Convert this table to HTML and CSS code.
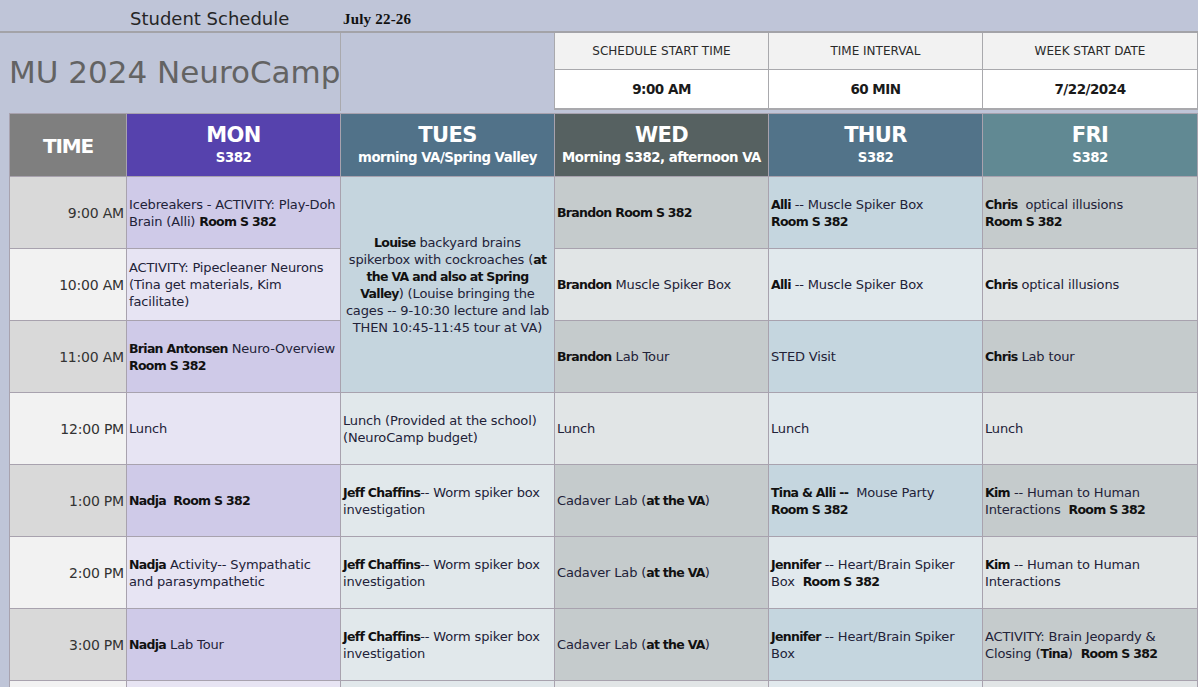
FILE: index.html
```html
<!DOCTYPE html>
<html lang="en">
<head>
<meta charset="utf-8">
<title>Student Schedule</title>
<link rel="stylesheet" href="styles.css">
</head>
<body>
<div class="topbar">
  <span class="sheet-title">Student Schedule</span>
  <span class="dates">July 22-26</span>
</div>
<div class="summary">
  <div class="camp-title">MU 2024 NeuroCamp</div>
  <div class="spacer"></div>
  <div class="settings">
    <div class="set-label">SCHEDULE START TIME</div>
    <div class="set-label">TIME INTERVAL</div>
    <div class="set-label">WEEK START DATE</div>
    <div class="set-value">9:00 AM</div>
    <div class="set-value">60 MIN</div>
    <div class="set-value">7/22/2024</div>
  </div>
</div>
<div class="schedule">
  <div class="hd hd-time"><span class="day">TIME</span></div>
  <div class="hd hd-mon"><span class="day">MON</span><span class="sub">S382</span></div>
  <div class="hd hd-tue"><span class="day">TUES</span><span class="sub">morning VA/Spring Valley</span></div>
  <div class="hd hd-wed"><span class="day">WED</span><span class="sub">Morning S382, afternoon VA</span></div>
  <div class="hd hd-thu"><span class="day">THUR</span><span class="sub">S382</span></div>
  <div class="hd hd-fri"><span class="day">FRI</span><span class="sub">S382</span></div>

  <div class="time dk">9:00 AM</div>
  <div class="c mon-dk"><p>Icebreakers - ACTIVITY: Play-Doh<br>Brain (Alli) <b>Room S 382</b></p></div>
  <div class="c tue-merge"><p><b>Louise</b> backyard brains<br>spikerbox with cockroaches (<b>at<br>the VA and also at Spring<br>Valley</b>) (Louise bringing the<br>cages -- 9-10:30 lecture and lab<br>THEN 10:45-11:45 tour at VA)</p></div>
  <div class="c gr-dk"><p><b>Brandon Room S 382</b></p></div>
  <div class="c bl-dk"><p><b>Alli</b> -- Muscle Spiker Box<br><b>Room S 382</b></p></div>
  <div class="c gr-dk"><p><b>Chris</b>&nbsp; optical illusions<br><b>Room S 382</b></p></div>

  <div class="time lt">10:00 AM</div>
  <div class="c mon-lt"><p>ACTIVITY: Pipecleaner Neurons<br>(Tina get materials, Kim<br>facilitate)</p></div>
  <div class="c gr-lt"><p><b>Brandon</b> Muscle Spiker Box</p></div>
  <div class="c bl-lt"><p><b>Alli</b> -- Muscle Spiker Box</p></div>
  <div class="c gr-lt"><p><b>Chris</b> optical illusions</p></div>

  <div class="time dk">11:00 AM</div>
  <div class="c mon-dk"><p><b>Brian Antonsen</b> Neuro-Overview<br><b>Room S 382</b></p></div>
  <div class="c gr-dk"><p><b>Brandon</b> Lab Tour</p></div>
  <div class="c bl-dk"><p>STED Visit</p></div>
  <div class="c gr-dk"><p><b>Chris</b> Lab tour</p></div>

  <div class="time lt">12:00 PM</div>
  <div class="c mon-lt"><p>Lunch</p></div>
  <div class="c tue-lt"><p>Lunch (Provided at the school)<br>(NeuroCamp budget)</p></div>
  <div class="c gr-lt"><p>Lunch</p></div>
  <div class="c bl-lt"><p>Lunch</p></div>
  <div class="c gr-lt"><p>Lunch</p></div>

  <div class="time dk">1:00 PM</div>
  <div class="c mon-dk"><p><b>Nadja&nbsp; Room S 382</b></p></div>
  <div class="c tue-lt"><p><b>Jeff Chaffins</b>-- Worm spiker box<br>investigation</p></div>
  <div class="c gr-dk"><p>Cadaver Lab (<b>at the VA</b>)</p></div>
  <div class="c bl-dk"><p><b>Tina &amp; Alli --</b>&nbsp; Mouse Party<br><b>Room S 382</b></p></div>
  <div class="c gr-dk"><p><b>Kim</b> -- Human to Human<br>Interactions&nbsp; <b>Room S 382</b></p></div>

  <div class="time lt">2:00 PM</div>
  <div class="c mon-lt"><p><b>Nadja</b> Activity-- Sympathatic<br>and parasympathetic</p></div>
  <div class="c tue-lt"><p><b>Jeff Chaffins</b>-- Worm spiker box<br>investigation</p></div>
  <div class="c gr-dk"><p>Cadaver Lab (<b>at the VA</b>)</p></div>
  <div class="c bl-lt"><p><b>Jennifer</b> -- Heart/Brain Spiker<br>Box&nbsp; <b>Room S 382</b></p></div>
  <div class="c gr-lt"><p><b>Kim</b> -- Human to Human<br>Interactions</p></div>

  <div class="time dk">3:00 PM</div>
  <div class="c mon-dk"><p><b>Nadja</b> Lab Tour</p></div>
  <div class="c tue-lt"><p><b>Jeff Chaffins</b>-- Worm spiker box<br>investigation</p></div>
  <div class="c gr-dk"><p>Cadaver Lab (<b>at the VA</b>)</p></div>
  <div class="c bl-dk"><p><b>Jennifer</b> -- Heart/Brain Spiker<br>Box</p></div>
  <div class="c gr-dk"><p>ACTIVITY: Brain Jeopardy &amp;<br>Closing (<b>Tina</b>)&nbsp; <b>Room S 382</b></p></div>

  <div class="time lt"></div>
  <div class="c mon-lt"></div>
  <div class="c tue-lt"></div>
  <div class="c gr-lt"></div>
  <div class="c bl-lt"></div>
  <div class="c gr-lt"></div>
</div>
</body>
</html>
```

FILE: styles.css
```css
html {
  overflow: hidden;
}
body {
  margin: 0;
  background: #bfc5d8;
  font-family: "DejaVu Sans", "Open Sans", sans-serif;
  color: #222;
}
.topbar {
  height: 33px;
  border-bottom: 2px solid #a3a3a8;
  display: flex;
  align-items: center;
  box-sizing: border-box;
  padding-top: 6px;
}
.sheet-title {
  margin-left: 130px;
  width: 213px;
  font-size: 18px;
  color: #262626;
}
.dates {
  font-family: "Liberation Serif", serif;
  font-size: 15px;
  font-weight: bold;
  color: #111;
  padding-top: 2px;
  letter-spacing: 0.2px;
}
.summary {
  display: flex;
  height: 80px;
}
.camp-title {
  width: 341px;
  box-sizing: border-box;
  border-right: 1px solid #a9a9ad;
  height: 78px;
  padding-left: 9px;
  display: flex;
  align-items: center;
  font-size: 31px;
  color: #636363;
  white-space: nowrap;
  overflow: hidden;
}
.spacer {
  width: 213px;
}
.settings {
  display: grid;
  grid-template-columns: 213px 213px 214px;
  grid-template-rows: 36px 38px;
  gap: 1px;
  padding: 0 1px 1px 1px;
  background: #a9a9ad;
  height: 76px;
}
.set-label {
  background: #f2f2f2;
  display: flex;
  align-items: center;
  justify-content: center;
  font-size: 12px;
  color: #2a2a2a;
}
.set-value {
  background: #fff;
  display: flex;
  align-items: center;
  justify-content: center;
  font-size: 13.5px;
  font-weight: bold;
  color: #1a1a1a;
  letter-spacing: -0.5px;
}
.schedule {
  margin-left: 9px;
  display: grid;
  grid-template-columns: 116px 213px 213px 213px 213px 214px;
  grid-template-rows: 62px repeat(8, 71px);
  gap: 1px;
  padding: 1px;
  background: #a8a2ae;
  width: max-content;
}
.hd {
  display: flex;
  flex-direction: column;
  align-items: center;
  justify-content: center;
  color: #fff;
  font-weight: bold;
  letter-spacing: -0.6px;
}
.hd .day {
  font-size: 21px;
  line-height: 25px;
}
.hd .sub {
  font-size: 13.3px;
  line-height: 20px;
  letter-spacing: -0.5px;
}
.hd-time { background: #7f7f7f; }
.hd-time .day { font-size: 20px; letter-spacing: -1.2px; padding-top: 2px; }
.hd-mon { background: #5642ad; }
.hd-tue { background: #517289; }
.hd-wed { background: #566161; }
.hd-thu { background: #527389; }
.hd-fri { background: #618993; }

.time {
  display: flex;
  align-items: center;
  justify-content: flex-end;
  padding-right: 2px;
  font-size: 14px;
  color: #333;
  letter-spacing: -0.2px;
}
.time.dk { background: #d9d9d9; }
.time.lt { background: #f2f2f2; }

.c {
  display: flex;
  align-items: center;
  padding: 0 2px;
  font-size: 13px;
  line-height: 17px;
  color: #222238;
  letter-spacing: -0.15px;
  white-space: nowrap;
  overflow: hidden;
}
.c p {
  margin: 0;
}
.c b {
  color: #111;
  font-size: 12.5px;
  letter-spacing: -0.7px;
}
.tue-merge {
  grid-row: span 3;
  background: #c5d5de;
  justify-content: center;
  text-align: center;
}
.mon-dk { background: #cfcae8; }
.mon-lt { background: #e7e4f3; }
.tue-lt { background: #e1e8eb; }
.gr-dk { background: #c5cbcc; }
.gr-lt { background: #e1e5e6; }
.bl-dk { background: #c5d6df; }
.bl-lt { background: #e1e9ed; }
```
